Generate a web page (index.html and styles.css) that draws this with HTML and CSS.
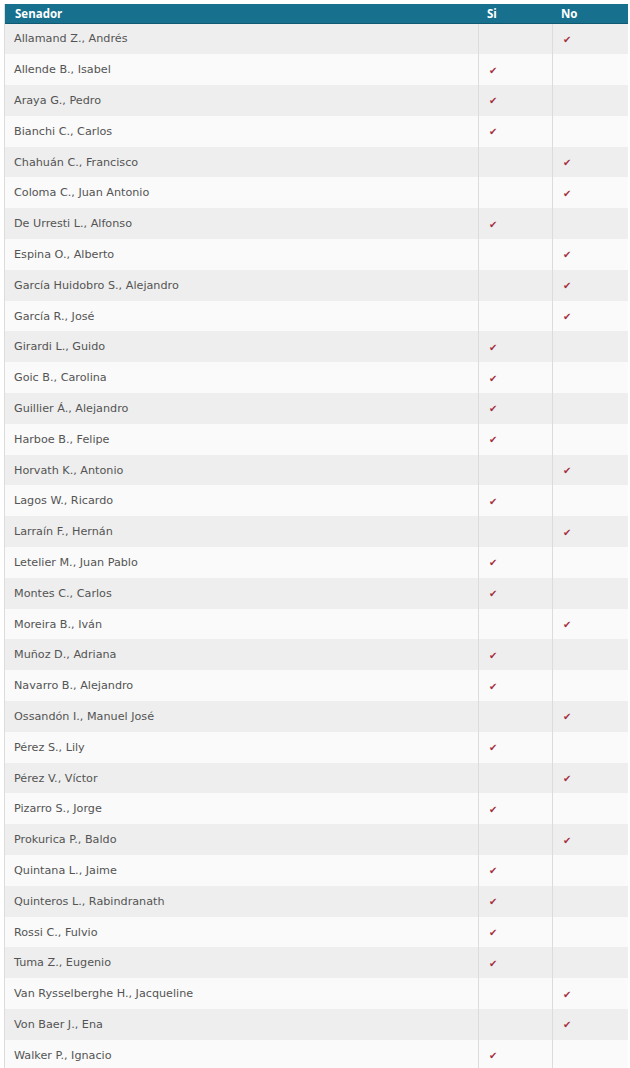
FILE: index.html
```html
<!DOCTYPE html>
<html lang="es">
<head>
<meta charset="utf-8">
<title>Votación</title>
<link rel="stylesheet" href="styles.css">
</head>
<body>
<div class="page">
  <div class="grid">
    <div class="hd name">Senador</div><div class="hd">Si</div><div class="hd">No</div>
    <div class="c name">Allamand Z., Andrés</div><div class="c"></div><div class="c"><span class="ck">✔</span></div>
    <div class="c name">Allende B., Isabel</div><div class="c"><span class="ck">✔</span></div><div class="c"></div>
    <div class="c name">Araya G., Pedro</div><div class="c"><span class="ck">✔</span></div><div class="c"></div>
    <div class="c name">Bianchi C., Carlos</div><div class="c"><span class="ck">✔</span></div><div class="c"></div>
    <div class="c name">Chahuán C., Francisco</div><div class="c"></div><div class="c"><span class="ck">✔</span></div>
    <div class="c name">Coloma C., Juan Antonio</div><div class="c"></div><div class="c"><span class="ck">✔</span></div>
    <div class="c name">De Urresti L., Alfonso</div><div class="c"><span class="ck">✔</span></div><div class="c"></div>
    <div class="c name">Espina O., Alberto</div><div class="c"></div><div class="c"><span class="ck">✔</span></div>
    <div class="c name">García Huidobro S., Alejandro</div><div class="c"></div><div class="c"><span class="ck">✔</span></div>
    <div class="c name">García R., José</div><div class="c"></div><div class="c"><span class="ck">✔</span></div>
    <div class="c name">Girardi L., Guido</div><div class="c"><span class="ck">✔</span></div><div class="c"></div>
    <div class="c name">Goic B., Carolina</div><div class="c"><span class="ck">✔</span></div><div class="c"></div>
    <div class="c name">Guillier Á., Alejandro</div><div class="c"><span class="ck">✔</span></div><div class="c"></div>
    <div class="c name">Harboe B., Felipe</div><div class="c"><span class="ck">✔</span></div><div class="c"></div>
    <div class="c name">Horvath K., Antonio</div><div class="c"></div><div class="c"><span class="ck">✔</span></div>
    <div class="c name">Lagos W., Ricardo</div><div class="c"><span class="ck">✔</span></div><div class="c"></div>
    <div class="c name">Larraín F., Hernán</div><div class="c"></div><div class="c"><span class="ck">✔</span></div>
    <div class="c name">Letelier M., Juan Pablo</div><div class="c"><span class="ck">✔</span></div><div class="c"></div>
    <div class="c name">Montes C., Carlos</div><div class="c"><span class="ck">✔</span></div><div class="c"></div>
    <div class="c name">Moreira B., Iván</div><div class="c"></div><div class="c"><span class="ck">✔</span></div>
    <div class="c name">Muñoz D., Adriana</div><div class="c"><span class="ck">✔</span></div><div class="c"></div>
    <div class="c name">Navarro B., Alejandro</div><div class="c"><span class="ck">✔</span></div><div class="c"></div>
    <div class="c name">Ossandón I., Manuel José</div><div class="c"></div><div class="c"><span class="ck">✔</span></div>
    <div class="c name">Pérez S., Lily</div><div class="c"><span class="ck">✔</span></div><div class="c"></div>
    <div class="c name">Pérez V., Víctor</div><div class="c"></div><div class="c"><span class="ck">✔</span></div>
    <div class="c name">Pizarro S., Jorge</div><div class="c"><span class="ck">✔</span></div><div class="c"></div>
    <div class="c name">Prokurica P., Baldo</div><div class="c"></div><div class="c"><span class="ck">✔</span></div>
    <div class="c name">Quintana L., Jaime</div><div class="c"><span class="ck">✔</span></div><div class="c"></div>
    <div class="c name">Quinteros L., Rabindranath</div><div class="c"><span class="ck">✔</span></div><div class="c"></div>
    <div class="c name">Rossi C., Fulvio</div><div class="c"><span class="ck">✔</span></div><div class="c"></div>
    <div class="c name">Tuma Z., Eugenio</div><div class="c"><span class="ck">✔</span></div><div class="c"></div>
    <div class="c name">Van Rysselberghe H., Jacqueline</div><div class="c"></div><div class="c"><span class="ck">✔</span></div>
    <div class="c name">Von Baer J., Ena</div><div class="c"></div><div class="c"><span class="ck">✔</span></div>
    <div class="c name">Walker P., Ignacio</div><div class="c"><span class="ck">✔</span></div><div class="c"></div>
  </div>
</div>
</body>
</html>
```

FILE: styles.css
```css
html, body {
  margin: 0;
  padding: 0;
  background: #ffffff;
}
.page {
  padding: 4px 3px 0 4px;
  font-family: "DejaVu Sans", "Open Sans", sans-serif;
  font-size: 11.2px;
  color: #545454;
}
.grid {
  display: grid;
  grid-template-columns: 473px 74px 76px;
  grid-template-rows: 19.5px;
  grid-auto-rows: 30.8px;
  border-left: 1px solid #dcdcdc;
}
.hd {
  background: #17708d;
  color: #ffffff;
  font-family: "Open Sans", "Liberation Sans", sans-serif;
  font-weight: bold;
  font-size: 11.5px;
  display: flex;
  align-items: center;
  padding-left: 9px;
  border-bottom: 1px solid #0f5a72;
}
.hd.name {
  padding-left: 10px;
}
.c {
  display: flex;
  align-items: center;
  padding-left: 10px;
  border-left: 1px solid #dcdcdc;
}
.c.name {
  border-left: none;
  padding-left: 9px;
}
.grid > .c:nth-child(6n+4),
.grid > .c:nth-child(6n+5),
.grid > .c:nth-child(6n+6) {
  background: #eeeeee;
}
.grid > .c:nth-child(6n+1),
.grid > .c:nth-child(6n+2),
.grid > .c:nth-child(6n+3) {
  background: #fafafa;
}
.ck {
  color: #a4303f;
  font-family: "DejaVu Sans", sans-serif;
  font-size: 10px;
  line-height: 1;
  padding-top: 2px;
}
```
